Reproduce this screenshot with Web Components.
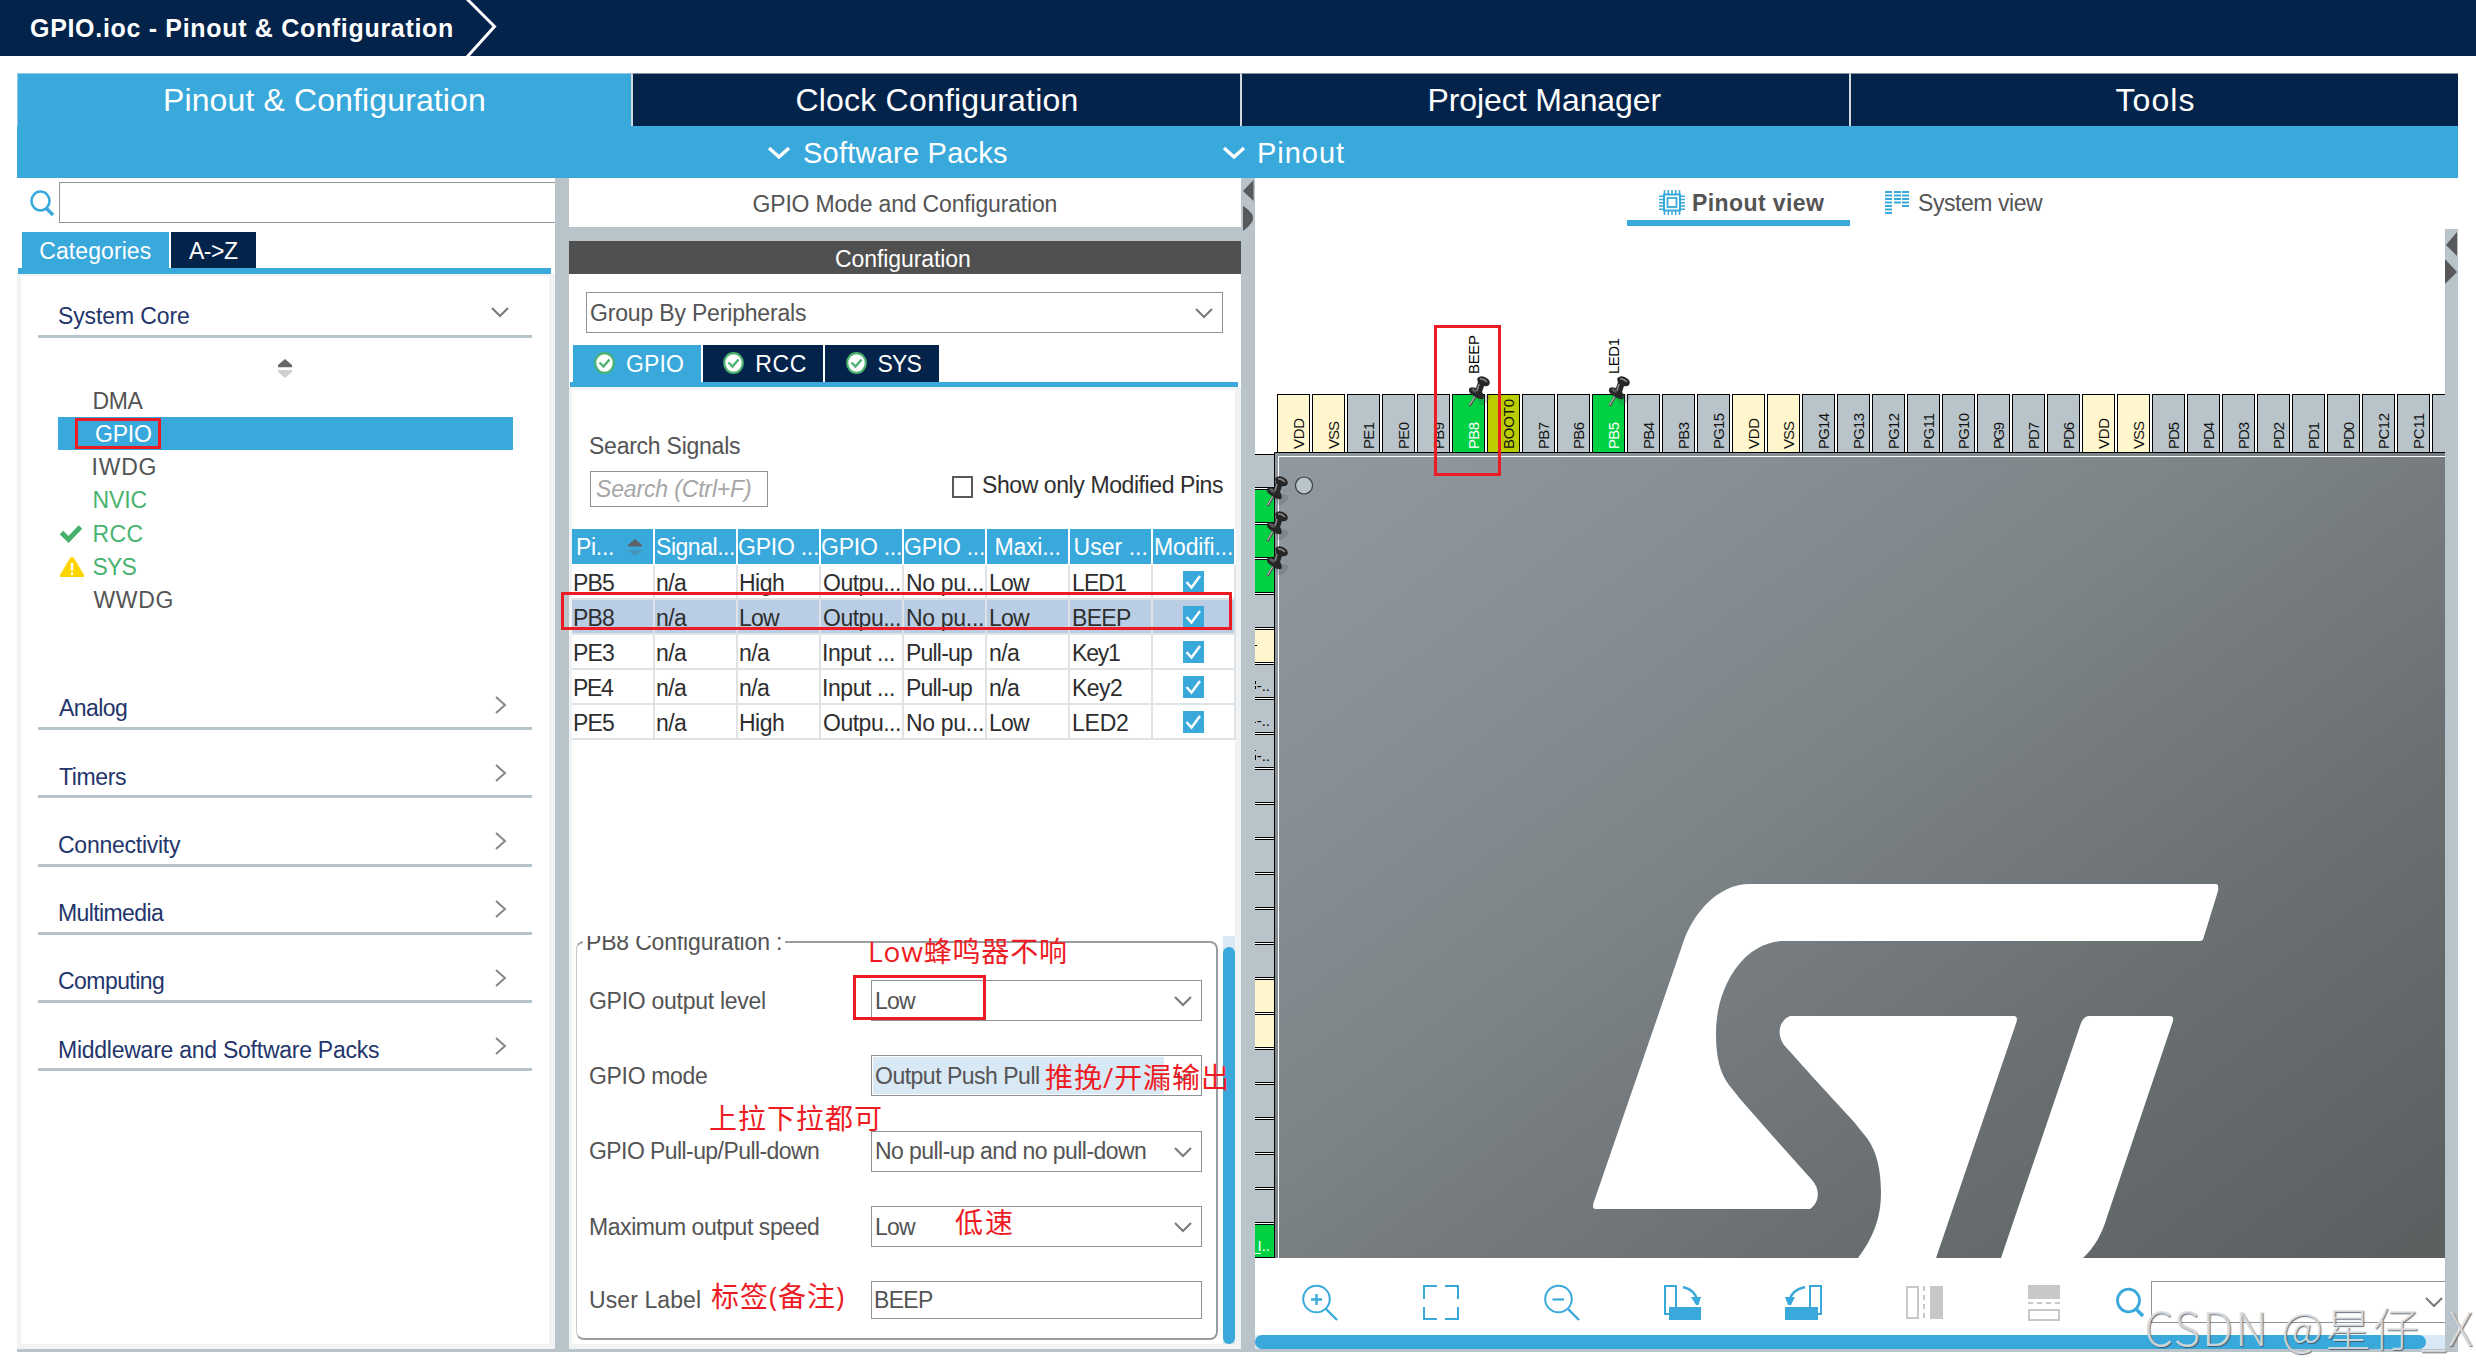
<!DOCTYPE html>
<html lang="en">
<head>
<meta charset="utf-8">
<title>GPIO.ioc - Pinout &amp; Configuration</title>
<style>
html,body{margin:0;padding:0;background:#fff}
body{width:2476px;height:1370px;overflow:hidden;position:relative;font:23px/1.15 "Liberation Sans","Noto Sans CJK SC",sans-serif;color:#545454}
</style>
</head>
<body>
<ioc-app></ioc-app>
<script>
const BASE = `*{box-sizing:border-box} svg{display:block;overflow:visible}`;
function define(name, css, html, after) {
  customElements.define(name, class extends HTMLElement {
    constructor() { super(); this.attachShadow({ mode: 'open' }); }
    connectedCallback() {
      if (this.done) return;
      this.done = true;
      this.shadowRoot.innerHTML = `<style>${BASE}${css}</style>` + (typeof html === 'function' ? html(this) : html);
      if (after) after(this);
    }
  });
}
const A = (el, n, d = '') => el.getAttribute(n) ?? d;

/* Text whose visible glyphs span exactly w pixels */
const ctx = document.createElement('canvas').getContext('2d');
define('fit-text', `:host{display:inline-block;white-space:pre;flex:none}span{display:inline-block}`, '<span><slot></slot></span>', el => {
  const cs = getComputedStyle(el), s = el.shadowRoot.querySelector('span'), t = el.textContent, w = +A(el, 'w');
  ctx.font = `${cs.fontStyle} ${cs.fontWeight} ${cs.fontSize} ${cs.fontFamily}`;
  const m = ctx.measureText(t), ink = m.actualBoundingBoxRight + m.actualBoundingBoxLeft;
  el.style.width = w + 'px';
  s.style.letterSpacing = ((w - ink) / Math.max(1, [...t].length - 1)) + 'px';
  s.style.marginLeft = m.actualBoundingBoxLeft + 'px';
});

const ICONS = {
  down: ['18', '10', '<path d="M1 1L9 9L17 1" fill="none" stroke="#77797b" stroke-width="2"/>'],
  right: ['11', '18', '<path d="M1 1L10 9L1 17" fill="none" stroke="#85878a" stroke-width="2"/>'],
  menu: ['24', '14', '<path d="M2 2L12 11L22 2" fill="none" stroke="#fff" stroke-width="3.4"/>'],
  search: ['24', '26', '<ellipse cx="10.5" cy="11" rx="9" ry="9.5" fill="none" stroke="#39a9dc" stroke-width="2.6"/><path d="M16 18L23 25" stroke="#39a9dc" stroke-width="3.4"/>'],
  search2: ['28', '29', '<ellipse cx="12.5" cy="12.5" rx="11" ry="11.3" fill="none" stroke="#39a9dc" stroke-width="2.8"/><path d="M19 20L27 28" stroke="#39a9dc" stroke-width="3.6"/>'],
  sort: ['14', '19', '<path d="M7 0L14 6V8H0V6Z" fill="#666"/><path d="M0 8.6H14" stroke="#d8d8d8"/><path d="M7 19L14 13V11H0V13Z" fill="#cfcfcf"/>'],
  sortBlue: ['14', '18', '<path d="M7 0L14 6V7.5H0V6Z" fill="#5c6266"/><path d="M7 17L14 12V11H0V12Z" fill="#4595be"/>'],
  check: ['22', '18', '<path d="M1.5 7.5L8.5 14.5L20.5 2" fill="none" stroke="#45b06c" stroke-width="5"/>'],
  warn: ['24', '20', '<path d="M12 0Q13.5 0 14.5 2L24 18V20H0V18L9.500 2Q10.500 0 12 0Z" fill="#ffd500"/><path d="M12 6V13.500M12 15.500V18" stroke="#fff" stroke-width="2.200"/>'],
  ok: ['21', '22', '<ellipse cx="10.500" cy="11" rx="9.300" ry="9.800" fill="#fff" stroke="#4bb36f" stroke-width="2.200"/><path d="M5.500 10.500L9.500 14.500L15.500 7.500" fill="none" stroke="#4bb36f" stroke-width="2.400"/>'],
  tick: ['21', '22', '<rect width="21" height="22" fill="#39a9dc"/><path d="M3.500 11L8.500 16.500L17 5" fill="none" stroke="#fff" stroke-width="2.400"/>'],
  chip: ['26', '25', '<g fill="none" stroke="#39a9dc"><rect x="5" y="4.500" width="16" height="16" stroke-width="2"/><rect x="8.500" y="8" width="9" height="9" stroke-width="1.800"/><path stroke-width="1.500" d="M5.500 0V4M9.300 0V4M13 0V4M16.700 0V4M20.500 0V4M5.500 21V25M9.300 21V25M13 21V25M16.700 21V25M20.500 21V25M0 6.200H4M0 9.500H4M0 12.700H4M0 16H4M0 19.200H4M22 6.200H26M22 9.500H26M22 12.700H26M22 16H26M22 19.200H26"/></g>'],
  system: ['24', '24', '<g stroke="#39a9dc" stroke-width="2"><path d="M0 1H7M0 4.500H7M0 8H7M0 11.500H7M0 15H7M0 18.500H7M0 22H7M9 1H16M9 4.500H16M9 8H16M9 11.500H16M17 1H24M17 4.500H24M17 8H24M17 11.500H24M17 15H24"/></g>'],
  zoomin: ['36', '36', '<ellipse cx="14.500" cy="14" rx="13.300" ry="13.300" fill="none" stroke="#39a9dc" stroke-width="2"/><path d="M9 14.500H20M14.500 9V20" stroke="#39a9dc" stroke-width="2.400"/><path d="M24 24L35 35" stroke="#39a9dc" stroke-width="2.400"/>'],
  zoomout: ['36', '36', '<ellipse cx="14.500" cy="14" rx="13.300" ry="13.300" fill="none" stroke="#39a9dc" stroke-width="2"/><path d="M8.500 14.500H20" stroke="#39a9dc" stroke-width="2.200"/><path d="M24 24L35 35" stroke="#39a9dc" stroke-width="2.400"/>'],
  fit: ['36', '35', '<path d="M1 14V1H14M22 1H35V14M35 22V34H22M14 34H1V22" fill="none" stroke="#39a9dc" stroke-width="2"/>'],
  rotr: ['37', '35', '<path d="M12 29H1V1H12V22" fill="none" stroke="#39a9dc" stroke-width="2"/><rect x="5" y="22" width="32" height="13" fill="#39a9dc"/><path d="M19 2Q31 5 33 15" fill="none" stroke="#39a9dc" stroke-width="2.400"/><path d="M27 12H37L34.500 20H32Z" fill="#39a9dc"/>'],
  rotl: ['37', '35', '<path d="M25 22V1H36V29H32" fill="none" stroke="#39a9dc" stroke-width="2"/><rect x="0" y="22" width="33" height="13" fill="#39a9dc"/><path d="M20 2Q7 5 4.500 15" fill="none" stroke="#39a9dc" stroke-width="2.400"/><path d="M0 12H10L6 20H3Z" fill="#39a9dc"/>'],
  fliph: ['37', '33', '<rect x="1" y="1" width="11" height="31" fill="none" stroke="#c8c8c8" stroke-width="2"/><path d="M18 0V33" stroke="#c8c8c8" stroke-width="2" stroke-dasharray="5 4"/><rect x="24" width="13" height="33" fill="#c8c8c8"/>'],
  flipv: ['32', '36', '<rect width="32" height="14" fill="#c8c8c8"/><path d="M0 18H32" stroke="#c8c8c8" stroke-width="2" stroke-dasharray="5 4"/><rect x="1" y="25" width="30" height="10" fill="none" stroke="#c8c8c8" stroke-width="2"/>'],
  arrows: ['11', '52', '<path d="M10.500 0V21L0 11Z" fill="#58595b"/><path d="M0 26Q4 28 9 34Q11 38 9 42Q5 48 0 51Z" fill="#58595b"/>'],
  arrows2: ['12', '52', '<path d="M12 0V24L1 13Z" fill="#58595b"/><path d="M0 27L12 40L0 52Z" fill="#58595b"/>'],
};
define('ui-icon', `:host{display:block;flex:none}`, el => {
  const [w, h, d] = ICONS[A(el, 'name')];
  return `<svg width="${w}" height="${h}" viewBox="0 0 ${w} ${h}">${d}</svg>`;
});

define('title-bar', `:host{display:flex;height:56px;background:#03234b;color:#fff;font-weight:bold;font-size:25px;align-items:center;padding-left:31px}
  fit-text{margin-right:15px}`,
  `<fit-text w="421">GPIO.ioc - Pinout &amp; Configuration</fit-text><svg width="30" height="56"><path d="M0 -1L27.500 26.500L0 57" fill="none" stroke="#fff" stroke-width="3"/></svg>`);

define('main-tabs', `:host{display:flex;height:53px;color:#fff;font-size:32px}
  div{display:flex;align-items:center;justify-content:center;background:#03234b;border-left:2px solid #d4d9de;border-top:1px solid #8793a5;width:609px;padding-top:1px}
  .a{background:#39a9dc;width:614px;border-left:1px solid #8fcbe8;border-top-color:#8fcbe8}`,
  `<div class="a"><fit-text w="319">Pinout &amp; Configuration</fit-text></div><div><fit-text w="280">Clock Configuration</fit-text></div><div><fit-text w="232">Project Manager</fit-text></div><div><fit-text w="78">Tools</fit-text></div>`);

define('sub-menu', `:host{display:flex;height:52px;background:#39a9dc;color:#fff;font-size:29px;align-items:center;padding:3px 0 0 750px}
  ui-icon{margin-right:13px;margin-top:-1px}.g{margin-right:215px}`,
  `<ui-icon name="menu"></ui-icon><fit-text class="g" w="203">Software Packs</fit-text><ui-icon name="menu"></ui-icon><fit-text w="85">Pinout</fit-text>`);

define('cat-header', `:host{display:flex;height:46px;border-bottom:3px solid #b7c3ca;color:#23356b;align-items:center;justify-content:space-between;padding:6px 26px 0 21px;flex:none}
  :host([open]) ui-icon{margin:-10px -3px 0 0}ui-icon{margin-top:-8px}`,
  el => `<fit-text w="${A(el, 'w')}">${A(el, 'label')}</fit-text><ui-icon name="${el.hasAttribute('open') ? 'down' : 'right'}"></ui-icon>`);

define('peri-item', `:host{display:flex;height:33.2px;align-items:center;margin:0 19px 0 20px;padding:2px 0 0 2px}
  .i{width:33.5px}:host([on]){background:#39a9dc;color:#fff}:host([on]) .i{width:36px}:host([green]){color:#48b36f}`,
  el => `<div class="i">${A(el, 'icon') ? `<ui-icon name="${A(el, 'icon')}"></ui-icon>` : ''}</div><fit-text w="${A(el, 'w')}">${A(el, 'label')}</fit-text>`);

define('tab-strip', `:host{display:flex;gap:2px;color:#fff;border-bottom:6px solid #39a9dc}`, `<slot></slot>`);
define('tab-item', `:host{display:flex;align-items:center;justify-content:center;background:#03234b;gap:12px;height:var(--h,36px);padding:var(--p,2px 0 0)}:host([on]){background:#39a9dc}`, `<slot></slot>`);

define('category-panel', `:host{display:flex;flex-direction:column;width:538px;padding-top:4px}
  .s{display:flex;height:41px;padding-left:13px;align-items:center}.s div{height:41px;flex:1;border:1px solid #8d9398;border-right:0;margin-left:5px}
  tab-strip{margin:9px 4px 0 1px;padding-left:4px}
  .p{flex:1;border:solid #f0f2f4;border-width:2px 6px 5px 4px;padding:16px 17px 0 17px}
  .list{height:346px;padding-top:21px}.list ui-icon{margin-left:240px;margin-bottom:5.500px}
  .g{display:flex;flex-direction:column;gap:22.3px}`,
  `<div class="s"><ui-icon name="search"></ui-icon><div></div></div>
   <tab-strip><tab-item on style="width:147px"><fit-text w="110.500">Categories</fit-text></tab-item><tab-item style="width:85px"><fit-text w="49">A-&gt;Z</fit-text></tab-item></tab-strip>
   <div class="p"><cat-header open w="130" label="System Core"></cat-header>
   <div class="list"><ui-icon name="sort"></ui-icon>
   <peri-item w="50" label="DMA"></peri-item><peri-item on w="55" label="GPIO"></peri-item><peri-item w="62" label="IWDG"></peri-item><peri-item green w="53" label="NVIC"></peri-item><peri-item green icon="check" w="49" label="RCC"></peri-item><peri-item green icon="warn" w="43" label="SYS"></peri-item><peri-item w="79" label="WWDG"></peri-item></div>
   <div class="g"><cat-header w="68" label="Analog"></cat-header><cat-header w="67" label="Timers"></cat-header><cat-header w="122" label="Connectivity"></cat-header><cat-header w="105" label="Multimedia"></cat-header><cat-header w="105" label="Computing"></cat-header><cat-header w="320" label="Middleware and Software Packs"></cat-header></div></div>`);

define('combo-box', `:host{display:flex;align-items:center;justify-content:space-between;border:1px solid #8d9398;height:41px;padding:1px 9px 0 4px;background:#fff}
  :host([hl]){background:linear-gradient(#d9e8f5,#d9e8f5) 1px 1px/291px 37px no-repeat #fff}`,
  el => `<fit-text w="${A(el, 'w')}">${A(el, 'value')}</fit-text>${el.hasAttribute('plain') ? '' : '<ui-icon name="down"></ui-icon>'}`);

define('pin-table', `:host{display:grid;grid-template-columns:repeat(8,1fr);width:664px}
  .h{background:#39a9dc;color:#fff;height:35px;border-right:2px solid #fff;display:flex;align-items:center;padding:2px 0 0 2px;margin-bottom:1px}
  .h.c{justify-content:center;padding:2px 0 0}
  .h.c0{padding-left:5px;gap:15px}
  .d{height:35px;border-right:2px solid #e0e3e6;border-bottom:2px solid #e0e3e6;color:#2e2e2e;display:flex;align-items:center;padding:4px 0 0 2px}
  .s{background:#b9cee4}.d.k{justify-content:center;padding:1px 0 0}.k ui-icon{margin-left:-1px}.m{padding-left:3px}`,
  () => {
    const W = { PB5: 40, PB8: 40, PE3: 40, PE4: 40, PE5: 40, 'n/a': 30, High: 44, Low: 40, 'Outpu...': 76, 'No pu...': 76, 'Input ...': 70, 'Pull-up': 65, LED1: 53, LED2: 55, BEEP: 58, Key1: 47, Key2: 49 };
    const heads = [['Signal...', 77, 'c'], ['GPIO ...', 79, 'c'], ['GPIO ...', 79, 'c'], ['GPIO ...', 79, 'c'], ['Maxi...', 64, 'c'], ['User ...', 72, 'c'], ['Modifi...', 77, 'c']];
    const rows = [['PB5', 'n/a', 'High', 'Outpu...', 'No pu...', 'Low', 'LED1'], ['PB8', 'n/a', 'Low', 'Outpu...', 'No pu...', 'Low', 'BEEP'], ['PE3', 'n/a', 'n/a', 'Input ...', 'Pull-up', 'n/a', 'Key1'], ['PE4', 'n/a', 'n/a', 'Input ...', 'Pull-up', 'n/a', 'Key2'], ['PE5', 'n/a', 'High', 'Outpu...', 'No pu...', 'Low', 'LED2']];
    return `<div class="h c0"><fit-text w="36">Pi...</fit-text><ui-icon name="sortBlue"></ui-icon></div>` +
      heads.map(h => `<div class="h ${h[2]}"><fit-text w="${h[1]}">${h[0]}</fit-text></div>`).join('') +
      rows.map((r, i) => r.map((t, j) => `<div class="d ${i == 1 ? 's' : ''} ${j > 2 ? 'm' : ''}"><fit-text w="${W[t]}">${t}</fit-text></div>`).join('') + `<div class="d k ${i == 1 ? 's' : ''}"><ui-icon name="tick"></ui-icon></div>`).join('');
  });

define('setting-row', `:host{display:flex;align-items:center;justify-content:space-between;height:41px;padding:0 14px 0 13px}::slotted(*){width:331px}fit-text{margin-top:1px}`,
  el => `<fit-text w="${A(el, 'w')}">${A(el, 'label')}</fit-text><slot></slot>`);

define('config-panel', `:host{display:flex;flex-direction:column;width:672px}
  .t{height:51px;background:#fff;display:flex;justify-content:center;align-items:center;padding-top:2px}
  .b{height:33px;background:#4f504f;color:#fff;display:flex;justify-content:center;align-items:center;margin-top:14px;padding:3px 4px 0 0}
  .c{background:#fff;flex:1;display:flex;flex-direction:column;padding-top:18px}
  .c>combo-box{margin:0 18px 0 17px;padding-top:2px}
  tab-strip{margin:12px 3px 0 1px;padding-left:3px;border-bottom-width:5px;--h:37px;--p:3px 0 0 3px}
  tab-item ui-icon{margin-top:-3px}
  .p{flex:1;border:solid #f0f2f4;border-width:3px 6px 5px 3px;display:flex;flex-direction:column}
  .ss{margin:43px 0 0 18px}
  .sr{display:flex;justify-content:space-between;align-items:center;margin:8px 12px 22px 18px}
  .in{border:1px solid #8d9398;width:178px;height:36px;font-style:italic;color:#a6a6a6;display:flex;align-items:center;padding-left:5px;margin-top:4px}
  .ck{display:flex;align-items:center;gap:10px;color:#2e2e2e}.ck i{width:21px;height:22px;border:2px solid #58595b}.ck fit-text{margin-top:-3px}
  .f{margin-top:196px;height:408px;display:flex;overflow:hidden}
  .fs{width:642px;margin-left:4px;border:2px solid #979da2;border-left:1px solid #c6cacd;border-radius:8px;margin-top:5px;height:399px;padding-top:37px;position:relative;display:flex;flex-direction:column;gap:34.300px;flex:none}
  .lg{position:absolute;left:6px;top:-14px;background:#fff;padding:0 4px;height:30px}
  .sb{width:13px;background:#d9e8f5;margin-left:5px;padding-top:11px;display:flex}.sb i{flex:1;background:#39a9dc;border-radius:7px}`,
  `<div class="t"><fit-text w="303">GPIO Mode and Configuration</fit-text></div><div class="b"><fit-text w="134">Configuration</fit-text></div>
   <div class="c"><combo-box w="215" value="Group By Peripherals"></combo-box>
   <tab-strip><tab-item on style="width:128px"><ui-icon name="ok"></ui-icon><fit-text w="56">GPIO</fit-text></tab-item><tab-item style="width:120px"><ui-icon name="ok"></ui-icon><fit-text w="49.500">RCC</fit-text></tab-item><tab-item style="width:114px"><ui-icon name="ok"></ui-icon><fit-text w="43">SYS</fit-text></tab-item></tab-strip>
   <div class="p"><div class="ss"><fit-text w="150">Search Signals</fit-text></div>
   <div class="sr"><div class="in"><fit-text w="155">Search (Ctrl+F)</fit-text></div><div class="ck"><i></i><fit-text w="240">Show only Modified Pins</fit-text></div></div>
   <pin-table></pin-table>
   <div class="f"><div class="fs"><div class="lg"><fit-text w="194">PB8 Configuration :</fit-text></div>
   <setting-row w="175" label="GPIO output level"><combo-box w="40" value="Low"></combo-box></setting-row>
   <setting-row w="117" label="GPIO mode"><combo-box hl w="163" value="Output Push Pull"></combo-box></setting-row>
   <setting-row w="229" label="GPIO Pull-up/Pull-down"><combo-box w="270" value="No pull-up and no pull-down"></combo-box></setting-row>
   <setting-row w="229" label="Maximum output speed"><combo-box w="40" value="Low"></combo-box></setting-row>
   <setting-row w="110" label="User Label" style="margin-top:-2px"><combo-box plain w="58" value="BEEP" style="height:38px;padding-left:3px"></combo-box></setting-row>
   </div><div class="sb"><i></i></div></div></div></div>`);

/* Package drawing: top and left pin rows, body and maker's mark */
define('chip-canvas', `:host{display:block;width:1190px;height:1029px;overflow:hidden}svg{overflow:hidden;font:15px "Liberation Sans",sans-serif}`,
  () => {
    const top = 'VDD VSS PE1 PE0 PB9 PB8 BOOT0 PB7 PB6 PB5 PB4 PB3 PG15 VDD VSS PG14 PG13 PG12 PG11 PG10 PG9 PD7 PD6 VDD VSS PD5 PD4 PD3 PD2 PD1 PD0 PC12 PC11'.split(' ');
    top.push('');
    const L = { VDD: 31, VSS: 28, BOOT0: 50 };
    let s = '';
    top.forEach((t, i) => {
      const x = 1277.500 + i * 35.010, fill = /VDD|VSS/.test(t) ? '#fff6ce' : t == 'BOOT0' ? '#bbcc00' : /PB8|PB5/.test(t) ? '#00d142' : '#b8c4ca';
      const n = L[t] || (t.length == 4 ? 36 : 27);
      s += `<rect x="${Math.round(x) - .5}" y="394.500" width="32" height="58" fill="${fill}" stroke="#000"/>`;
      if (t) s += `<text transform="translate(${Math.round(x) + 26},449) rotate(-90)" fill="${fill == '#00d142' ? '#fff' : '#111'}" textLength="${n}">${t}</text>`;
    });
    for (let k = 0; k < 23; k++) {
      const y = 454.500 + k * 35, fill = [5, 15, 16].includes(k) ? '#fff6ce' : [1, 2, 3, 22].includes(k) ? '#00d142' : '#b8c4ca';
      s += `<rect x="1200" y="${y}" width="74.500" height="33" fill="${fill}" stroke="#000"/>`;
    }
    s += `<path d="M1255 645.500H1257M1255.500 681V684M1255.500 686V689M1255 722.500H1256M1255 750.500H1256M1255.500 755V760" stroke="#000"/><path d="M1255 1253.500H1261" stroke="#fff"/>`;
    [['-..', 691, '#000'], ['-..', 726, '#000'], ['-..', 761, '#000'], ['I..', 1251, '#fff']].forEach(([t, y, c]) => s += `<text x="1270" y="${y}" text-anchor="end" fill="${c}">${t}</text>`);
    const pin = (x, y) => `<g transform="translate(${x},${y})"><path d="M9 22Q14 17 21 19Q24 22 20 25Q16 30 12 29Z" fill="#444a50" opacity=".22"/><path d="M7.500 20L1.500 30" stroke="#555" stroke-width="2.600"/><path d="M7 20L1.500 29" stroke="#ccc" stroke-width="1"/><path d="M1 13Q2 10 8 12L10 6Q8 2 11 1Q15 -1 20 3Q23 6 21 9Q19 11 16 10L14 16Q17 20 15 23Q12 24 6 20Q0 17 1 13Z" fill="#262626"/><path d="M11 8L9 15M12 3Q15 2 19 6" stroke="#858585" stroke-width="1.700" fill="none"/><ellipse cx="6" cy="14.500" rx="3" ry="1.500" fill="#5a5a5a" transform="rotate(35 6 14.500)"/></g>`;
    return `<svg width="1190" height="1029" viewBox="1255 229 1190 1029"><defs><linearGradient id="g" gradientUnits="userSpaceOnUse" x1="1478" y1="350" x2="2243" y2="1380"><stop offset="0" stop-color="#90989f"/><stop offset=".3" stop-color="#838a8f"/><stop offset=".42" stop-color="#7d8486"/><stop offset=".52" stop-color="#757b7f"/><stop offset=".7" stop-color="#6a7072"/><stop offset="1" stop-color="#5a5f60"/></linearGradient></defs>
    <rect x="1255" y="229" width="1190" height="1029" fill="#fff"/>${s}
    <path d="M1274.500 1258V452.500H2446" fill="url(#g)" stroke="#000"/><path d="M1275 453H2446V1258H1275Z" fill="url(#g)"/>
    <path d="M1278.500 1258V456.500H2446" fill="none" stroke="#fff"/>
    <circle cx="1304" cy="485.500" r="8.500" fill="#b8c4ca" stroke="#343a3c" stroke-width="1.200"/>
    <g fill="#fff"><path d="M1750 884H2216Q2219 884 2218 891L2203.500 938Q2203 941 2200 941H1784C1745 941 1716 985 1716 1033C1716 1058 1720 1073 1729 1085L1741 1100L1770 1133L1812 1180C1821 1190 1819 1203 1810 1209H1595Q1592 1209 1593.500 1203L1683 943C1693 913 1718 884 1750 884Z"/>
    <path d="M1790 1016H2014Q2018 1016 2016.500 1022L1936 1258H1858C1873 1238 1881 1218 1881 1193C1881 1165 1875 1146 1862 1132L1854 1122L1814.500 1079L1784 1045C1777 1036 1778 1021 1790 1016Z"/>
    <path d="M2089 1016H2170Q2174 1016 2173 1021L2107 1217C2102 1234 2094 1248 2083 1258H2001L2081 1023Q2084 1016 2089 1016Z"/></g>
    <text transform="translate(1479,374) rotate(-90)" textLength="39">BEEP</text><text transform="translate(1619,374) rotate(-90)" textLength="36">LED1</text>
    ${pin(1468, 376)}${pin(1608, 376)}${pin(1266, 476)}${pin(1266, 511)}${pin(1266, 546)}</svg>`;
  });

define('pinout-view', `:host{display:flex;flex-direction:column;width:1203px;background:#fff}
  .v{height:51px;display:flex;align-items:flex-start;padding-left:372px}
  .v div{height:48px;display:flex;align-items:center;gap:9px}.v .a{width:223px;padding-left:32px;border-bottom:6px solid #39a9dc;font-weight:bold;padding-top:8px;gap:8px}.v .b{padding:8px 0 6px 35px;gap:10px}
  .v ui-icon{margin-top:-1px}
  .m{display:flex;flex:1}.l{width:1190px;display:flex;flex-direction:column}
  .s{width:13px;background:#b8c4ca;padding-top:3px}
  .t{height:77px;display:flex;align-items:flex-start;padding:27px 0 0 47px}
  .cb{width:294px;height:42px;border:1px solid #8d9398;border-right:0;display:flex;align-items:center;justify-content:flex-end;padding-right:2px;margin-top:-4px}
  .h{height:14px;background:#d9e8f5}.h i{display:block;width:1171px;height:14px;border-radius:7px;background:#39a9dc}`,
  `<div class="v"><div class="a"><ui-icon name="chip"></ui-icon><fit-text w="131">Pinout view</fit-text></div><div class="b"><ui-icon name="system"></ui-icon><fit-text w="124">System view</fit-text></div></div>
   <div class="m"><div class="l"><chip-canvas></chip-canvas>
   <div class="t"><ui-icon name="zoomin"></ui-icon><ui-icon name="fit" style="margin-left:85px"></ui-icon><ui-icon name="zoomout" style="margin-left:85px"></ui-icon><ui-icon name="rotr" style="margin-left:84px"></ui-icon><ui-icon name="rotl" style="margin-left:84px"></ui-icon><ui-icon name="fliph" style="margin-left:84px;margin-top:1px"></ui-icon><ui-icon name="flipv" style="margin-left:85px"></ui-icon><ui-icon name="search2" style="margin:3px 7px 0 56px"></ui-icon><div class="cb"><ui-icon name="down"></ui-icon></div></div>
   <div class="h"><i></i></div></div><div class="s"><ui-icon name="arrows2"></ui-icon></div></div>`);

/* Mark-up drawn over the window: frames and notes */
define('mark-box', `:host{position:absolute;border:3px solid #ed1c24;box-sizing:border-box}`, '');
define('mark-note', `:host{position:absolute;color:#ed1c24;font:28px/40px "Open Sans","Noto Sans CJK SC",sans-serif}`, el => `<fit-text w="${A(el, 'w')}">${el.getAttribute('text')}</fit-text>`);
define('water-mark', `:host{position:absolute;left:2146px;top:1298px;font:300 46px/56px "Noto Sans CJK SC",sans-serif;color:rgba(226,228,230,.86);text-shadow:1px 1px 1px rgba(60,70,80,.75)}`, `<fit-text w="327">CSDN @星仔_X</fit-text>`);

define('ioc-app', `:host{display:block;height:1370px}
  .w{margin:17px 0 0 17px;width:2441px}
  .b{display:flex;height:1174px;background:#b8c4ca;padding-bottom:3px}
  category-panel{background:#fff}
  .d1{width:14px}.d2{width:14px;padding:2px 0 0 2px}`,
  `<title-bar></title-bar><div class="w"><main-tabs></main-tabs><sub-menu></sub-menu>
   <div class="b"><category-panel></category-panel><div class="d1"></div><config-panel></config-panel><div class="d2"><ui-icon name="arrows"></ui-icon></div><pinout-view></pinout-view></div></div>
   <mark-box style="left:75px;top:418px;width:86px;height:31px"></mark-box>
   <mark-box style="left:561px;top:592px;width:671px;height:38px"></mark-box>
   <mark-box style="left:853px;top:975px;width:133px;height:45px"></mark-box>
   <mark-box style="left:1434px;top:325px;width:67px;height:151px"></mark-box>
   <mark-note text="Low蜂鸣器不响" w="196" style="left:870px;top:931px"></mark-note>
   <mark-note text="推挽/开漏输出" w="182" style="left:1045px;top:1057px"></mark-note>
   <mark-note text="上拉下拉都可" w="171" style="left:710px;top:1098px"></mark-note>
   <mark-note text="低速" w="57" style="left:955px;top:1202px"></mark-note>
   <mark-note text="标签(备注)" w="133" style="left:711px;top:1276px"></mark-note>
   <water-mark></water-mark>`);
</script>
</body>
</html>
